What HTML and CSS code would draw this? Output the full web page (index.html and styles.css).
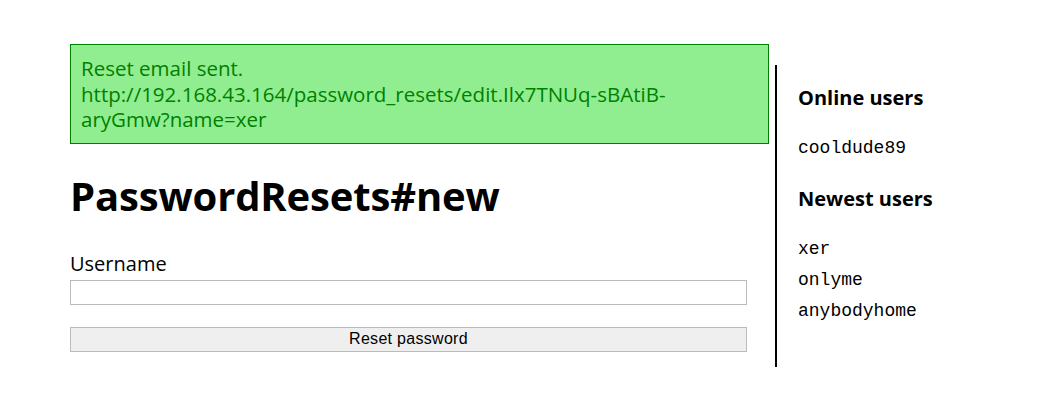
FILE: index.html
```html
<!DOCTYPE html>
<html>
<head>
<meta charset="utf-8">
<link rel="stylesheet" href="styles.css">
</head>
<body>
<div class="page">
  <main class="main">
    <div class="notice">Reset email sent.<br>http://192.168.43.164/password_resets/edit.Ilx7TNUq-sBAtiB-aryGmw?name=xer</div>
    <h1 class="title">PasswordResets#new</h1>
    <form class="form">
      <label class="label" for="username">Username</label>
      <input class="input" id="username" type="text">
      <button class="button" type="button">Reset password</button>
    </form>
  </main>
  <aside class="sidebar">
    <h2 class="side-title">Online users</h2>
    <ul class="users">
      <li>cooldude89</li>
    </ul>
    <h2 class="side-title">Newest users</h2>
    <ul class="users">
      <li>xer</li>
      <li>onlyme</li>
      <li>anybodyhome</li>
    </ul>
  </aside>
</div>
</body>
</html>
```
FILE: styles.css
```css
html, body {
  margin: 0;
  padding: 0;
  background: #fff;
}
body {
  font-family: "Open Sans", "Noto Sans", sans-serif;
  color: #000;
}
.page {
  display: flex;
  align-items: flex-start;
  padding: 44px 0 0 70px;
}
.main {
  width: 699px;
  flex: none;
}
.notice {
  box-sizing: border-box;
  width: 699px;
  background: #90ee90;
  border: 1px solid #008000;
  color: #008000;
  font-size: 20.5px;
  line-height: 25.5px;
  padding: 11px 16px 10px 10px;
  overflow-wrap: break-word;
}
.title {
  font-size: 40px;
  font-weight: 700;
  margin: 26px 0 0;
  line-height: 52px;
  letter-spacing: -0.15px;
}
.form {
  display: flex;
  flex-direction: column;
  width: 677px;
  margin-top: 29px;
}
.label {
  font-size: 20px;
  line-height: 26px;
  margin-bottom: 3px;
}
.input {
  box-sizing: border-box;
  height: 25px;
  width: 677px;
  border: 1px solid #bbb;
  margin: 0;
}
.button {
  box-sizing: border-box;
  margin-top: 22px;
  height: 25px;
  width: 677px;
  background: #efefef;
  border: 1px solid #bbb;
  font-family: "Liberation Sans", Arial, sans-serif;
  font-size: 16px;
  letter-spacing: 0.3px;
  color: #000;
  padding: 0;
}
.sidebar {
  margin-left: 6px;
  margin-top: 21px;
  border-left: 2px solid #000;
  padding: 20px 0 40px 21px;
  width: 200px;
}
.side-title {
  font-size: 20px;
  font-weight: 700;
  margin: 0;
  line-height: 26px;
}
.users {
  list-style: none;
  margin: 22px 0 22px;
  padding: 0;
  font-family: "Liberation Mono", "DejaVu Sans Mono", monospace;
  font-size: 18px;
  line-height: 31px;
}
.users:last-child {
  margin-bottom: 0;
}
```
